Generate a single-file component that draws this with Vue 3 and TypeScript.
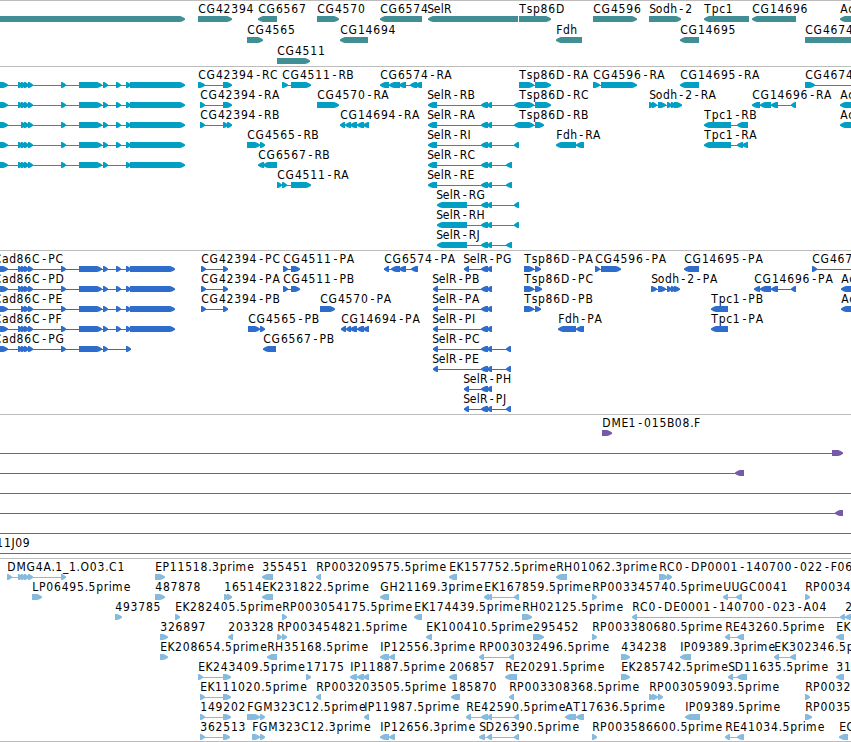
<template>
  <main class="browser">
    <section
      v-for="track in tracks"
      :key="track.name"
      class="track"
      :class="track.name"
    >
      <svg :width="width" :height="track.height" :viewBox="`0 0 ${width} ${track.height}`">
        <g
          v-for="(feature, i) in track.features"
          :key="i"
          :transform="`translate(0 ${feature.row * track.pitch})`"
        >
          <rect
            class="line"
            :x="feature.start"
            y="18"
            :width="feature.end - feature.start"
            height="1"
          />
          <polygon
            v-for="(block, j) in feature.blocks"
            :key="j"
            class="block"
            :points="arrow(block, feature.dir)"
          />
          <text v-if="feature.label" :x="letterPositions(feature)" y="12">{{ feature.label }}</text>
        </g>
      </svg>
    </section>
  </main>
</template>

<script setup lang="ts">
type Dir = "r" | "l";
type Block = [number, number];

interface Feature {
  row: number;
  label: string;
  dir: Dir;
  blocks: Block[];
  start: number;
  end: number;
  labelX: number;
}

interface Track {
  name: string;
  height: number;
  pitch: number;
  features: Feature[];
}

const width = 851;
const left = -10;
const right = 861;

// letter advances in px, digits are all the same
const digit = 7.68;
const advances: Record<string, number> = {
  A: 8.1, C: 8.4, D: 9.2, E: 7.2, F: 6.7, G: 9.3, H: 9, I: 3.5, J: 3.6, K: 7.7,
  L: 6.7, M: 10, O: 9.4, P: 7.4, R: 7.9, S: 6.6, T: 7.5, U: 8.3,
  a: 7.2, c: 6.5, d: 7.3, e: 7, h: 7.2, i: 3.3, l: 3.2, m: 11.7, o: 7.1,
  p: 7.6, r: 4.9, s: 6.3, ".": 3.8, "-": 7.8, _: 6,
};

// blocks are written as "start-end start-end ..."
function f(
  row: number,
  label: string,
  dir: Dir,
  spec: string,
  extra: { start?: number; end?: number; labelX?: number } = {}
): Feature {
  const blocks = spec
    ? spec.split(" ").map((part) => part.split("-").map(Number) as Block)
    : [];
  const start = extra.start ?? blocks[0][0];
  const end = extra.end ?? blocks[blocks.length - 1][1];
  return { row, label, dir, blocks, start, end, labelX: extra.labelX ?? start };
}

function letterPositions({ label, labelX }: Feature) {
  let x = labelX + 0.2;
  return [...label]
    .map((letter) => {
      // the hyphen glyph is narrow, centre it in its cell
      const current = letter === "-" ? x + 1.9 : x;
      x += advances[letter] ?? digit;
      return current.toFixed(1);
    })
    .join(" ");
}

function arrow([a, b]: Block, dir: Dir) {
  const head = Math.min(6, b - a);
  const half = head * 0.6;
  if (dir === "r") {
    const n = b - head;
    return `${a},15 ${n + 1.2},15 ${n + half},16 ${b},17.6 ${b},18.8 ${n + half},20.2 ${n + 1.2},21 ${a},21`;
  }
  const n = a + head;
  return `${b},15 ${n - 1.2},15 ${n - half},16 ${a},17.6 ${a},18.8 ${n - half},20.2 ${n - 1.2},21 ${b},21`;
}

const cadStart = "0-8 18-23 21-26 24-29 28-33 61-66 79-102 103-108";
const cadShort = "0-8 21-26 24-29 28-33 61-66 79-102 103-108";
const cad = { start: left };
const cadLabel = { start: left, labelX: -6.5 };
const mid = "481-488 487-492";

const genes = [
  f(0, "", "r", "0-185", cad),
  f(0, "CG42394", "r", "198-232"),
  f(0, "CG6567", "l", "258-277"),
  f(0, "CG4570", "r", "317-339"),
  f(0, "CG6574", "l", "380-422"),
  f(0, "SelR", "l", "428-518", { labelX: 427 }),
  f(0, "Tsp86D", "r", "519-551"),
  f(0, "CG4596", "r", "593-637"),
  f(0, "Sodh-2", "r", "649-681"),
  f(0, "Tpc1", "l", "704-749"),
  f(0, "CG14696", "l", "752-796"),
  f(0, "Ac", "l", "840-860"),
  f(1, "CG4565", "r", "247-263"),
  f(1, "CG14694", "l", "340-368"),
  f(1, "Fdh", "l", "556-582"),
  f(1, "CG14695", "l", "680-699"),
  f(1, "CG4674", "r", "805-870"),
  f(2, "CG4511", "r", "277-310"),
];

const transcripts = [
  f(0, "", "r", `${cadStart} 116-121 126-131 130-185`, cad),
  f(1, "", "r", `${cadStart} 116-121 126-131 130-185`, cad),
  f(2, "", "r", `${cadShort} 116-121 126-131 130-185`, cad),
  f(3, "", "r", `${cadStart} 116-121 126-131 130-185`, cad),
  f(4, "", "r", `${cadStart} 126-131 130-185`, cad),
  f(0, "CG42394-RC", "r", "198-205 223-232"),
  f(1, "CG42394-RA", "r", "200-205 223-232"),
  f(2, "CG42394-RB", "r", "200-205 223-228 227-232"),
  f(3, "CG4565-RB", "r", "247-260 260-265"),
  f(4, "CG6567-RB", "l", "258-264 263-277"),
  f(5, "CG4511-RA", "r", "277-282 282-287 291-311"),
  f(0, "CG4511-RB", "r", "282-288 291-311"),
  f(1, "CG4570-RA", "r", "317-339"),
  f(2, "CG14694-RA", "l", "340-345 345-351 350-357 357-364 363-369"),
  f(0, "CG6574-RA", "l", "380-389 389-400 399-406 410-417 415-422"),
  f(1, "SelR-RB", "l", `428-437 ${mid} 514-526`, { labelX: 427 }),
  f(2, "SelR-RA", "l", `428-437 ${mid} 514-526`, { labelX: 427 }),
  f(3, "SelR-RI", "l", `428-437 ${mid} 514-519`, { labelX: 427 }),
  f(4, "SelR-RC", "l", `428-437 ${mid} 506-512`, { labelX: 427 }),
  f(5, "SelR-RE", "l", `428-437 ${mid} 506-512`, { labelX: 427 }),
  f(6, "SelR-RG", "l", `437-467 ${mid} 514-519`, { labelX: 436 }),
  f(7, "SelR-RH", "l", `437-467 ${mid} 514-519`, { labelX: 436 }),
  f(8, "SelR-RJ", "l", `437-467 ${mid} 506-512`, { labelX: 436 }),
  f(0, "Tsp86D-RA", "r", "519-534 535-551"),
  f(1, "Tsp86D-RC", "r", "519-534 535-551"),
  f(2, "Tsp86D-RB", "r", "519-534 535-544"),
  f(3, "Fdh-RA", "l", "556-576 576-584"),
  f(0, "CG4596-RA", "r", "593-600 601-637"),
  f(1, "Sodh-2-RA", "r", "649-654 652-657 658-666 667-672 671-676 674-682"),
  f(0, "CG14695-RA", "l", "680-699"),
  f(2, "Tpc1-RB", "l", "704-731 737-748"),
  f(3, "Tpc1-RA", "l", "704-731 737-743 742-748"),
  f(1, "CG14696-RA", "l", "752-760 760-771 771-778 791-796"),
  f(0, "CG4674", "r", "805-815", { end: right }),
  f(1, "Ac", "l", "840-860"),
  f(2, "Ac", "l", "840-860"),
];

const proteins = [
  f(0, "Cad86C-PC", "r", `${cadStart} 116-121 126-131 130-175`, cadLabel),
  f(1, "Cad86C-PD", "r", `${cadStart} 116-121 126-131 130-175`, cadLabel),
  f(2, "Cad86C-PE", "r", `${cadShort} 116-121 126-131 130-175`, cadLabel),
  f(3, "Cad86C-PF", "r", `${cadStart} 116-121 126-131 130-175`, cadLabel),
  f(4, "Cad86C-PG", "r", `${cadStart} 126-131`, cadLabel),
  f(0, "CG42394-PC", "r", "201-206 223-228"),
  f(1, "CG42394-PA", "r", "201-206 223-228"),
  f(2, "CG42394-PB", "r", "201-206 223-228"),
  f(0, "CG4511-PA", "r", "283-288 291-300"),
  f(1, "CG4511-PB", "r", "283-288 291-300"),
  f(3, "CG4565-PB", "r", "248-260 260-265"),
  f(4, "CG6567-PB", "l", "263-276"),
  f(2, "CG4570-PA", "r", "320-335"),
  f(3, "CG14694-PA", "l", "341-346 346-351 350-357 357-364 363-369"),
  f(0, "CG6574-PA", "l", "384-389 391-400 399-406 411-418"),
  f(0, "SelR-PG", "l", `464-469 ${mid}`, { labelX: 463 }),
  f(1, "SelR-PB", "l", `433-438 ${mid}`, { labelX: 432 }),
  f(2, "SelR-PA", "l", `433-438 ${mid}`, { labelX: 432 }),
  f(3, "SelR-PI", "l", `433-438 ${mid}`, { labelX: 432 }),
  f(4, "SelR-PC", "l", `433-438 ${mid} 506-511`, { labelX: 432 }),
  f(5, "SelR-PE", "l", `433-438 ${mid} 506-511`, { labelX: 432 }),
  f(6, "SelR-PH", "l", `464-469 ${mid}`, { labelX: 463 }),
  f(7, "SelR-PJ", "l", `464-469 ${mid} 506-511`, { labelX: 463 }),
  f(0, "Tsp86D-PA", "r", "524-534 535-541"),
  f(1, "Tsp86D-PC", "r", "524-534 535-542"),
  f(2, "Tsp86D-PB", "r", "524-534 535-541"),
  f(3, "Fdh-PA", "l", "558-576 576-584"),
  f(0, "CG4596-PA", "r", "595-600 601-621"),
  f(1, "Sodh-2-PA", "r", "651-657 658-666 667-672 671-676 674-680"),
  f(0, "CG14695-PA", "l", "684-699"),
  f(2, "Tpc1-PB", "l", "711-728"),
  f(3, "Tpc1-PA", "l", "711-728"),
  f(1, "CG14696-PA", "l", "754-760 760-771 771-778 791-796"),
  f(0, "CG467", "r", "812-817", { end: right }),
  f(1, "Ac", "l", "841-860"),
  f(2, "Ac", "l", "841-860"),
];

const clones = [
  f(0, "DME1-015B08.F", "r", "602-612"),
  f(1, "", "r", "832-843", { start: left }),
  f(2, "", "l", "735-744", { start: left }),
  f(3, "", "r", "", { start: left, end: right }),
  f(4, "", "l", "835-843", { start: left }),
  f(5, "", "r", "", { start: left, end: right }),
  f(6, "11J09", "r", "", { start: left, end: right, labelX: -4 }),
];

const ests = [
  f(0, "DMG4A.1_1.O03.C1", "r", "7-12 18-23 21-26 24-29 28-33 61-66"),
  f(0, "EP11518.3prime", "r", "155-165"),
  f(0, "355451", "l", "262-273"),
  f(0, "RP003209575.5prime", "l", "316-321"),
  f(0, "EK157752.5prime", "l", "449-457"),
  f(0, "RH01062.3prime", "l", "556-567"),
  f(0, "RC0-DP0001-140700-022-F06", "r", "659-668 667-672"),
  f(1, "LP06495.5prime", "r", "32-42"),
  f(1, "487878", "r", "155-165"),
  f(1, "16514", "r", "224-229 227-232"),
  f(1, "EK231822.5prime", "l", "262-273"),
  f(1, "GH21169.3prime", "l", "380-389"),
  f(1, "EK167859.5prime", "l", "484-489 487-492 514-519"),
  f(1, "RP003345740.5prime", "r", "592-597"),
  f(1, "UUGC0041", "l", "723-728 736-742"),
  f(1, "RP0034", "r", "805-810"),
  f(2, "493785", "r", "115-122"),
  f(2, "EK282405.5prime", "r", "175-180"),
  f(2, "RP003054175.5prime", "r", "282-287"),
  f(2, "EK174439.5prime", "l", "414-422"),
  f(2, "RH02125.5prime", "r", "522-532"),
  f(2, "RC0-DE0001-140700-023-A04", "l", "632-637 840-845"),
  f(2, "2", "l", "845-860"),
  f(3, "326897", "r", "160-168"),
  f(3, "203328", "l", "228-233"),
  f(3, "RP003454821.5prime", "r", "277-282 282-287"),
  f(3, "EK100410.5prime", "l", "426-432"),
  f(3, "295452", "r", "533-544"),
  f(3, "RP003380680.5prime", "r", "592-597"),
  f(3, "RE43260.5prime", "l", "725-730 737-744"),
  f(3, "EK", "l", "836-844"),
  f(4, "EK208654.5prime", "r", "160-168"),
  f(4, "RH35168.5prime", "l", "267-277"),
  f(4, "IP12556.3prime", "l", "380-389 389-395"),
  f(4, "RP003032496.5prime", "l", "479-484 509-514"),
  f(4, "434238", "r", "621-630"),
  f(4, "IP09389.3prime", "l", "680-691"),
  f(4, "EK302346.5prime", "l", "774-779 790-796"),
  f(5, "EK243409.5prime", "r", "198-203 223-231"),
  f(5, "17175", "r", "306-311"),
  f(5, "IP11887.5prime", "l", "350-357 357-364 363-369"),
  f(5, "206857", "l", "449-457"),
  f(5, "RE20291.5prime", "l", "505-517"),
  f(5, "EK285742.5prime", "r", "621-630"),
  f(5, "SD11635.5prime", "l", "728-733 737-747"),
  f(5, "31", "l", "836-844"),
  f(6, "EK111020.5prime", "r", "200-205 223-231"),
  f(6, "RP003203505.5prime", "l", "316-321"),
  f(6, "185870", "l", "451-460"),
  f(6, "RP003308368.5prime", "l", "509-514"),
  f(6, "RP003059093.5prime", "r", "649-654 652-658 658-663"),
  f(6, "RP0032", "r", "805-810"),
  f(7, "149202", "r", "200-205 223-231"),
  f(7, "FGM323C12.5prime", "r", "247-260 260-265"),
  f(7, "IP11987.5prime", "l", "364-369"),
  f(7, "RE42590.5prime", "l", `466-471 ${mid} 514-519`),
  f(7, "AT17636.5prime", "l", "565-576 576-584"),
  f(7, "IP09389.5prime", "l", "685-700"),
  f(7, "RP0035", "r", "805-812"),
  f(8, "362513", "r", "200-205 223-230"),
  f(8, "FGM323C12.3prime", "r", "252-260 260-265"),
  f(8, "IP12656.3prime", "l", "380-389 389-395"),
  f(8, "SD26390.5prime", "l", "479-485 487-492 514-519"),
  f(8, "RP003586600.5prime", "r", "592-597"),
  f(8, "RE41034.5prime", "l", "725-730 737-744"),
  f(8, "EC", "l", "839-848"),
];

const tracks: Track[] = [
  { name: "genes", height: 65, pitch: 21, features: genes },
  { name: "transcripts", height: 183, pitch: 20, features: transcripts },
  { name: "proteins", height: 163, pitch: 20, features: proteins },
  { name: "clones", height: 143, pitch: 20, features: clones },
  { name: "ests", height: 182, pitch: 20, features: ests },
];
</script>

<style>
body {
  background: #fff;
}
</style>

<style scoped>
.browser {
  width: 851px;
  overflow: hidden;
  border-bottom: 1px solid #bcbcbc;
}

.track {
  border-top: 1px solid #bcbcbc;
}

svg {
  display: block;
}

.line {
  fill: currentColor;
  shape-rendering: crispEdges;
}

.block {
  fill: currentColor;
}

text {
  font-family: "DejaVu Sans Condensed", "DejaVu Sans", sans-serif;
  font-stretch: condensed;
  font-size: 12px;
  fill: #000;
}

.genes {
  color: #418e94;
}

.transcripts {
  color: #009fc3;
}

.proteins {
  color: #2f6dcc;
}

.clones {
  color: #7659a8;
}

.ests {
  color: #86bbdd;
}
</style>
